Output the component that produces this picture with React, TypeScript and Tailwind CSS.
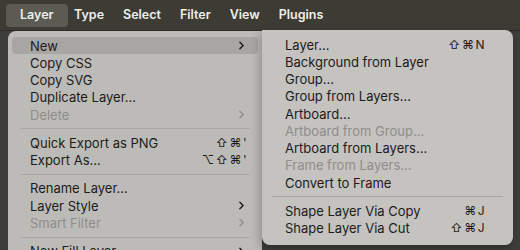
import { ChevronRight } from "lucide-react";

type Item =
  | { sep: true }
  | { label: string; shortcut?: string; sub?: boolean; disabled?: boolean; active?: boolean; sep?: false };

const mainItems: Item[] = [
  { label: "New", sub: true, active: true },
  { label: "Copy CSS" },
  { label: "Copy SVG" },
  { label: "Duplicate Layer..." },
  { label: "Delete", sub: true, disabled: true },
  { sep: true },
  { label: "Quick Export as PNG", shortcut: "⇧⌘'" },
  { label: "Export As...", shortcut: "⌥⇧⌘'" },
  { sep: true },
  { label: "Rename Layer..." },
  { label: "Layer Style", sub: true },
  { label: "Smart Filter", sub: true, disabled: true },
  { sep: true },
  { label: "New Fill Layer", sub: true },
];

const subItems: Item[] = [
  { label: "Layer...", shortcut: "⇧⌘N" },
  { label: "Background from Layer" },
  { label: "Group..." },
  { label: "Group from Layers..." },
  { label: "Artboard..." },
  { label: "Artboard from Group...", disabled: true },
  { label: "Artboard from Layers..." },
  { label: "Frame from Layers...", disabled: true },
  { label: "Convert to Frame" },
  { sep: true },
  { label: "Shape Layer Via Copy", shortcut: "⌘J" },
  { label: "Shape Layer Via Cut", shortcut: "⇧⌘J" },
];

const menuBar = ["Type", "Select", "Filter", "View", "Plugins"];

function MenuRows({ items, padL, padR, sepX }: { items: Item[]; padL: string; padR: string; sepX: string }) {
  return (
    <>
      {items.map((item, i) =>
        item.sep ? (
          <div key={i} className={`h-[11px] flex items-center ${sepX}`}>
            <div className="h-px w-full bg-[#a9a7a4]" />
          </div>
        ) : (
          <div
            key={i}
            className={`h-[17.25px] flex items-center rounded-[4px] leading-none ${padL} ${padR} ${
              item.active ? "bg-[#a8a6a3]" : ""
            } ${item.disabled ? "text-[#8e8d8a]" : "text-[#1b1b1b]"}`}
          >
            <span className="flex-1 whitespace-nowrap pt-[1px]">{item.label}</span>
            {item.shortcut && (
              <span className="whitespace-nowrap tracking-[1.5px] text-[12px]">{item.shortcut}</span>
            )}
            {item.sub && <ChevronRight className="w-[13px] h-[13px]" strokeWidth={2.6} />}
          </div>
        )
      )}
    </>
  );
}

export default function App() {
  return (
    <div
      className="w-[520px] h-[250px] overflow-hidden bg-[#3d3d3b] flex flex-col"
      style={{ fontFamily: "Inter, 'DejaVu Sans', sans-serif" }}
    >
      {/* Menu bar */}
      <div className="h-[31px] shrink-0 bg-[#3c3b34] flex items-center pl-[6px] border-b border-[#2c2c28] text-[12.5px] font-semibold text-[#efefea]">
        <div className="h-[23px] w-[62px] flex items-center rounded-[4px] bg-[#5b5a53] pl-[14px]">Layer</div>
        <div className="flex items-center gap-[19px] ml-[6px]">
          {menuBar.map((m) => (
            <span key={m}>{m}</span>
          ))}
        </div>
      </div>

      {/* Menus */}
      <div className="flex items-start pl-[8px] text-[13px]">
        <div className="w-[254px] shrink-0 bg-[#bdbbb8] rounded-tl-[8px] pt-[6px] px-[4px] h-[240px]">
          <MenuRows items={mainItems} padL="pl-[18px]" padR="pr-[10px]" sepX="px-[8px]" />
        </div>
        <div className="w-[251px] shrink-0 bg-[#c5c3c0] rounded-b-[8px] rounded-tr-[8px] pt-[6px] pb-[8px] px-[4px] shadow-[-2px_4px_10px_rgba(0,0,0,0.25)] -mt-[1px]">
          <MenuRows items={subItems} padL="pl-[19px]" padR="pr-[23px]" sepX="px-[6px]" />
        </div>
      </div>
    </div>
  );
}
